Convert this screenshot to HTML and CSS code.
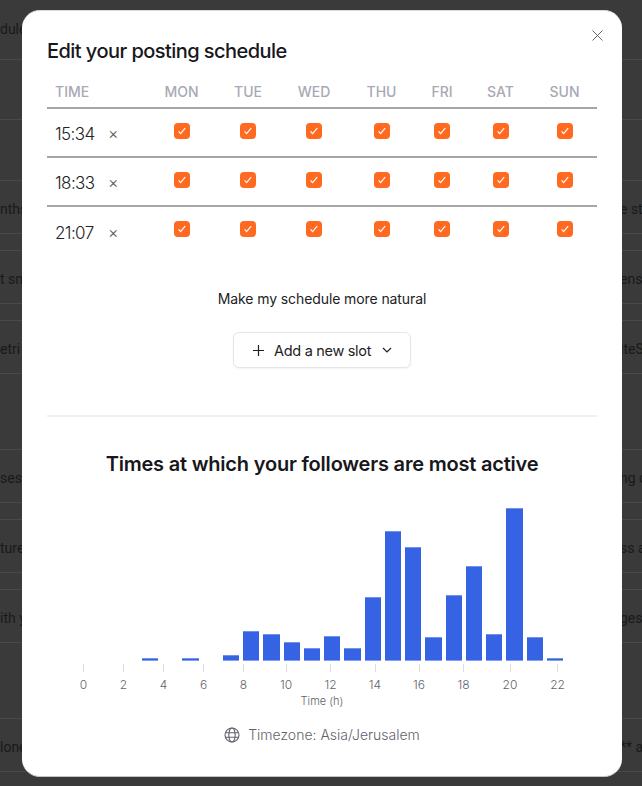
FILE: index.html
```html
<!DOCTYPE html>
<html lang="en">
<head>
    <meta charset="UTF-8">
    <title>Edit your posting schedule</title>
    <link rel="stylesheet" href="styles.css">
</head>
<body>
    <!-- Page behind the dialog, dimmed -->
    <div class="backdrop">
        <div class="row h59"><span>dule</span></div>
        <div class="row h60"></div>
        <div class="row h61"></div>
        <div class="row h53"><span>nths of</span><span>e str</span></div>
        <div class="row h17"></div>
        <div class="row h53"><span>t sm</span><span>ens)</span></div>
        <div class="row h17"></div>
        <div class="row h53"><span>etri</span><span>iteS</span></div>
        <div class="row h76"></div>
        <div class="row h53"><span>ses:</span><span>ng o</span></div>
        <div class="row h17"></div>
        <div class="row h53"><span>ture</span><span>ss a</span></div>
        <div class="row h17"></div>
        <div class="row h53"><span>ith y</span><span>ges</span></div>
        <div class="row h76"></div>
        <div class="row h53"><span>lone</span><span>** a</span></div>
    </div>

    <div class="modal">
        <button class="close">
            <svg width="11" height="11" viewBox="0 0 11 11"><path d="M0.5 0.5L10.5 10.5M10.5 0.5L0.5 10.5"/></svg>
        </button>
        <h2 class="title">Edit your posting schedule</h2>

        <div class="grid head">
            <div class="time-cell">TIME</div>
            <div>MON</div><div>TUE</div><div>WED</div><div>THU</div><div>FRI</div><div>SAT</div><div>SUN</div>
        </div>
        <div class="grid slot">
            <div class="time-cell"><span class="time">15:34</span><span class="remove">×</span></div>
            <div><span class="check"></span></div><div><span class="check"></span></div><div><span class="check"></span></div><div><span class="check"></span></div><div><span class="check"></span></div><div><span class="check"></span></div><div><span class="check"></span></div>
        </div>
        <div class="grid slot">
            <div class="time-cell"><span class="time">18:33</span><span class="remove">×</span></div>
            <div><span class="check"></span></div><div><span class="check"></span></div><div><span class="check"></span></div><div><span class="check"></span></div><div><span class="check"></span></div><div><span class="check"></span></div><div><span class="check"></span></div>
        </div>
        <div class="grid slot last">
            <div class="time-cell"><span class="time">21:07</span><span class="remove">×</span></div>
            <div><span class="check"></span></div><div><span class="check"></span></div><div><span class="check"></span></div><div><span class="check"></span></div><div><span class="check"></span></div><div><span class="check"></span></div><div><span class="check"></span></div>
        </div>

        <p class="natural">Make my schedule more natural</p>
        <button class="add">
            <svg width="13" height="13" viewBox="0 0 13 13"><path d="M6.5 1V12M1 6.5H12"/></svg>
            <span>Add a new slot</span>
            <svg width="10" height="6" viewBox="0 0 10 6"><path d="M1 1L5 5L9 1"/></svg>
        </button>
        <hr class="divider">
        <h2 class="chart-title">Times at which your followers are most active</h2>

        <!-- viewBox uses page coordinates -->
        <svg class="chart" width="550" height="222" viewBox="47 490 550 222">
            <g class="bars">
                <rect x="142" y="658.3" width="16" height="2.3"/>
                <rect x="182" y="658.3" width="17" height="2.3"/>
                <rect x="223" y="655.3" width="16" height="5.3"/>
                <rect x="243" y="631.3" width="16" height="29.3"/>
                <rect x="263" y="634.3" width="17" height="26.3"/>
                <rect x="284" y="642.3" width="16" height="18.3"/>
                <rect x="304" y="648.3" width="16" height="12.3"/>
                <rect x="324" y="636.3" width="16" height="24.3"/>
                <rect x="344" y="648.3" width="17" height="12.3"/>
                <rect x="365" y="597.3" width="16" height="63.3"/>
                <rect x="385" y="531.3" width="16" height="129.3"/>
                <rect x="405" y="547.3" width="16" height="113.3"/>
                <rect x="425" y="637.3" width="17" height="23.3"/>
                <rect x="446" y="595.3" width="16" height="65.3"/>
                <rect x="466" y="566.3" width="16" height="94.3"/>
                <rect x="486" y="634.3" width="16" height="26.3"/>
                <rect x="506" y="508.3" width="17" height="152.3"/>
                <rect x="527" y="637.3" width="16" height="23.3"/>
                <rect x="547" y="658.3" width="16" height="2.3"/>
            </g>
            <path class="ticks" d="M83.5 664V672M123.5 664V672M163.5 664V672M203.5 664V672M243.5 664V672M286.5 664V672M330.5 664V672M375.5 664V672M419.5 664V672M463.5 664V672M510.5 664V672M557.5 664V672"/>
            <g class="labels">
                <text x="83.5" y="689">0</text>
                <text x="123.5" y="689">2</text>
                <text x="163.5" y="689">4</text>
                <text x="203.5" y="689">6</text>
                <text x="243.5" y="689">8</text>
                <text x="286" y="689">10</text>
                <text x="330.5" y="689">12</text>
                <text x="375" y="689">14</text>
                <text x="419" y="689">16</text>
                <text x="463.5" y="689">18</text>
                <text x="510" y="689">20</text>
                <text x="557.5" y="689">22</text>
            </g>
            <text class="axis-name" x="322" y="705">Time (h)</text>
        </svg>

        <div class="timezone">
            <svg width="16" height="16" viewBox="0 0 16 16"><circle cx="8" cy="8" r="7"/><ellipse cx="8" cy="8" rx="3.2" ry="7"/><path d="M1.3 5.7H14.7M1.3 10.3H14.7"/></svg>
            <span>Timezone: Asia/Jerusalem</span>
        </div>
    </div>

    <script>
        // Same tick in every checkbox
        document.querySelectorAll('.check').forEach(box => {
            box.innerHTML = '<svg width="10" height="8" viewBox="0 0 10 8"><path d="M1.6 4.4L3.6 6.6L8.2 1.2"/></svg>';
        });
    </script>
</body>
</html>
```

FILE: styles.css
```css
body {
    margin: 0;
    height: 786px;
    overflow: hidden;
    background-color: #3a3a3a;
    font-family: Inter, "Liberation Sans", sans-serif;
    position: relative;
}
.row {
    box-sizing: border-box;
    display: flex;
    justify-content: space-between;
    align-items: center;
    border-bottom: 1px solid #494949;
    color: #191919;
    font-family: Roboto, sans-serif;
    font-size: 14px;
    white-space: nowrap;
    overflow: hidden;
}
.row span + span {
    width: 22px;
}
.h59 { height: 60px; padding-bottom: 2px; }
.h60 { height: 60px; }
.h61 { height: 61px; }
.h53 { height: 53px; padding-top: 3px; }
.h17 { height: 17px; }
.h76 { height: 76px; }

.modal {
    position: absolute;
    top: 10px;
    left: 22px;
    box-sizing: border-box;
    width: 600px;
    height: 767px;
    padding: 0 25px;
    background-color: white;
    border-radius: 18px;
    border-top: 1px solid #d8d8d8;
    border-bottom: 1px solid #c4c4c4;
}
.close {
    position: absolute;
    top: 19px;
    right: 19px;
    padding: 0;
    border: none;
    background: none;
    display: flex;
}
.close path {
    stroke: #666;
    fill: none;
}
.title {
    margin: 0;
    padding-top: 27px;
    height: 45px;
    font-size: 20px;
    line-height: 26px;
    font-weight: 500;
    letter-spacing: -0.55px;
    color: #17171c;
    box-sizing: content-box;
}
.grid {
    display: grid;
    grid-template-columns: 98px 71px 62px 70px 65px 56px 61px 67px;
    box-sizing: border-box;
    height: 49px;
    text-align: center;
}
.grid > div {
    padding-left: 2px;
}
.grid > .time-cell {
    text-align: left;
    padding-left: 8px;
    display: flex;
    align-items: center;
}
.head {
    height: 26px;
    border-bottom: 2px solid #a6a6a6;
    font-size: 14px;
    line-height: 18px;
    font-weight: 500;
    color: #a9a9b4;
}
.head .time-cell {
    align-items: flex-start;
}
.slot {
    border-bottom: 2px solid #a6a6a6;
}
.slot.last {
    border-bottom: none;
}
.slot > div {
    padding-top: 10px;
}
.slot > .time-cell {
    padding-top: 3px;
}
.time {
    font-size: 17px;
    font-weight: 300;
    color: #222;
    width: 50px;
    letter-spacing: -0.6px;
}
.remove {
    font-size: 16px;
    font-weight: 300;
    color: #555;
    margin: 0 0 2px 3px;
}
.check {
    display: inline-flex;
    justify-content: center;
    align-items: center;
    width: 16px;
    height: 16px;
    border-radius: 4px;
    background-color: #ff6a20;
}
.check path {
    stroke: white;
    stroke-width: 1.2;
    fill: none;
}
.natural {
    margin: 33px 0 0;
    text-align: center;
    font-size: 14px;
    line-height: 20px;
    font-weight: 400;
    letter-spacing: -0.1px;
    color: #222;
}
.add {
    display: flex;
    align-items: center;
    width: 178px;
    height: 36px;
    margin: 23px auto 0;
    padding: 0 0 0 18px;
    box-sizing: border-box;
    background-color: white;
    border: 1px solid #e6e6e6;
    border-radius: 6px;
    box-shadow: 0 1px 2px rgba(0, 0, 0, 0.05);
    font-family: inherit;
    font-size: 14.5px;
    font-weight: 400;
    letter-spacing: -0.3px;
    color: #222;
}
.add span {
    margin: 0 11px 0 9px;
}
.add path {
    stroke: #222;
    stroke-width: 1.2;
    fill: none;
}
.divider {
    margin: 47px 0 0;
    border: none;
    height: 2px;
    background-color: #f0f0f0;
}
.chart-title {
    margin: 34px 0 0;
    text-align: center;
    font-size: 20px;
    line-height: 26px;
    font-weight: 600;
    letter-spacing: -0.2px;
    color: #17171c;
}
.chart {
    display: block;
    margin-top: 13px;
}
.bars rect {
    fill: #3563e3;
}
.ticks {
    stroke: #dedede;
    fill: none;
}
.labels text {
    font-size: 12px;
    font-weight: 300;
    fill: #62626c;
    text-anchor: middle;
}
.axis-name {
    font-size: 11px;
    font-weight: 300;
    fill: #62626c;
    text-anchor: middle;
}
.timezone {
    display: flex;
    justify-content: center;
    align-items: center;
    gap: 8px;
    margin-top: 14px;
    font-size: 14px;
    font-weight: 300;
    color: #62626c;
}
.timezone svg {
    fill: none;
    stroke: #62626c;
    stroke-width: 1.1;
}
```
